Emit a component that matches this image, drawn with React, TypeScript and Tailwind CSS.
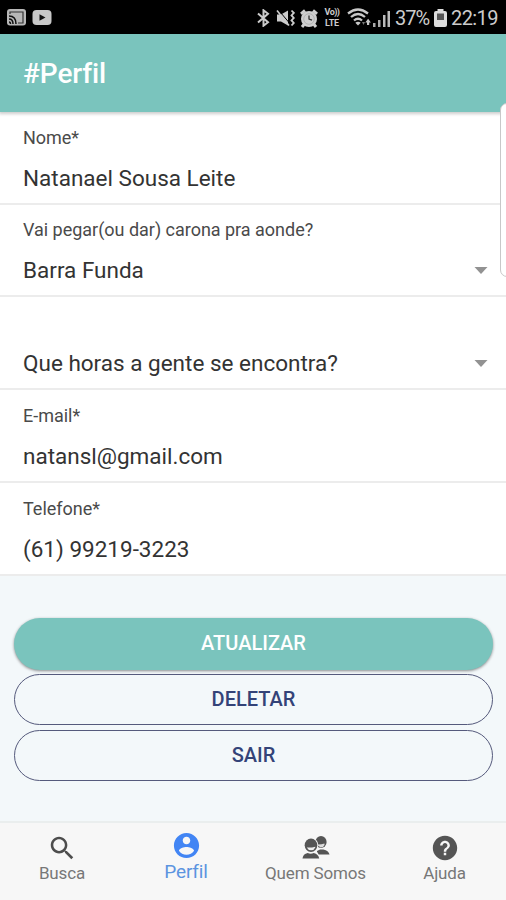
import type { ReactNode } from "react";
import { IoMdContact, IoMdHelpCircle, IoMdSearch } from "react-icons/io";

function CastIcon() {
  return (
    <svg width="19" height="17" viewBox="0 0 19 17">
      <rect width="19" height="16.5" rx="3" fill="#b8b8b8" />
      <path d="M3 5V3h13v11h-5" fill="none" stroke="#333" strokeWidth="1.2" />
      <path d="M2 7q7 0 7 8M2 10q4 0 4 5M2 13q1.5 0 1.5 2" fill="none" stroke="#111" strokeWidth="1.5" />
    </svg>
  );
}

function PlayIcon() {
  return (
    <svg width="20" height="15" viewBox="0 0 20 15">
      <rect x="0.5" width="19" height="15" rx="4" fill="#c8c8c8" />
      <path d="M7.5 4.2v6.6l6-3.3z" fill="#111" />
    </svg>
  );
}

function BluetoothIcon() {
  return (
    <svg width="13" height="18" viewBox="0 0 13 18" fill="none" stroke="#ccc" strokeWidth="2">
      <path d="M1 4.500l10 8.700-4.500 3.500V1.300L11 4.800 1 13.500" />
    </svg>
  );
}

function MuteIcon() {
  return (
    <svg width="19" height="19" viewBox="0 0 19 19" fill="#ccc">
      <path d="M1 5.500h4l7-4v15l-7-4H1z" />
      <path d="M2 .5l11 13" stroke="#000" strokeWidth="1" />
      <path d="M1 1.500l12 15" stroke="#ccc" strokeWidth="1.6" />
      <path d="M15.5 1.5l2.3 2.4-2.3 2.5 2.3 2.5-2.3 2.5 2.3 2.5-2.3 2.6" fill="none" stroke="#ccc" strokeWidth="1.8" />
    </svg>
  );
}

function AlarmIcon() {
  return (
    <svg width="18" height="19" viewBox="0 0 18 19" fill="none" stroke="#cfcfcf">
      <circle cx="9" cy="10" r="8" fill="#cfcfcf" stroke="none" />
      <path d="M1 4.8L5 1.500M17 4.8l-4-3.300M4 15.500L2 18M14 15.500l2 2.500" strokeWidth="3" />
      <circle cx="9" cy="10" r="5.300" stroke="#aaa" strokeWidth="0.8" />
      <path d="M9 6.500V10l3 1.200" stroke="#333" strokeWidth="1.300" />
    </svg>
  );
}

function WifiIcon() {
  return (
    <svg width="26" height="20" viewBox="0 0 26 20" fill="none" stroke="#c8c8c8" strokeWidth="2.300">
      <path d="M1 5.500q10-8 20 0M4 9q7-6 14 0M7 12.500q4-3.600 8 0" />
      <path d="M11 17.500l-2.700-2.800q2.700-2 5.400 0z" fill="#c8c8c8" stroke="none" />
      <path d="M15 14h3l-1.500 3z" fill="#777" stroke="none" />
      <path d="M18.300 14.500l2.800-3.800 2.800 3.800h-1.700V17H20v-2.500z" fill="#c8c8c8" stroke="none" />
    </svg>
  );
}

function SignalIcon() {
  return (
    <svg width="18" height="17" viewBox="0 0 18 17">
      <path d="M0 13h2.500v4H0zM5 10h2.500v7H5z" fill="#aaa" />
      <path d="M10 5h2.500v12H10zM14.500 1H17v16h-2.500z" fill="#bbb" />
    </svg>
  );
}

function BatteryIcon() {
  return (
    <svg width="13" height="18" viewBox="0 0 13 18">
      <path d="M3.500 0h6v2H11q2 0 2 2v12q0 2-2 2H2q-2 0-2-2V4q0-2 2-2h1.500z" fill="#ddd" />
      <path d="M3 4.500h7V11H3z" fill="#555" />
    </svg>
  );
}

function PeopleIcon() {
  return (
    <svg width="28" height="25" viewBox="0 0 28 25">
      <g fill="#555">
        <ellipse cx="19" cy="7" rx="5.600" ry="6" />
        <path d="M15 19.500v-3.500l3-1.500h3.500q5 1 6 5z" />
      </g>
      <path d="M15 9.500q4 .3 7.500-1v1.500q-1 2.500-4 2.500z" fill="#ddd" />
      <ellipse cx="9" cy="10.300" rx="7.400" ry="7.600" fill="#f7f7f7" />
      <path d="M4 16h10q3 2 3.500 8H4z" fill="#f7f7f7" />
      <ellipse cx="9" cy="10.300" rx="6.300" ry="6.800" fill="#555" />
      <path d="M4.800 12.500q4.500.3 8.500-.8v.8q-1.200 2.800-4.200 2.800t-4.300-2.800z" fill="#eee" />
      <path d="M.5 23.500q.5-4.700 5.200-5.500 3 1.500 6 0 4.800 1 5.500 5.500z" fill="#555" />
    </svg>
  );
}

function StatusBar() {
  return (
    <div className="flex h-[34px] justify-between bg-black pl-[7px] pr-2 pt-[9px] text-[#ccc]">
      <div className="flex gap-[6px]">
        <CastIcon />
        <div className="pt-[1px]"><PlayIcon /></div>
      </div>
      <div className="flex items-start">
        <div className="mr-[6px]"><BluetoothIcon /></div>
        <div className="mr-[5px]"><MuteIcon /></div>
        <div className="mr-[5px]"><AlarmIcon /></div>
        <div className="mr-[6px] w-[18px] text-center text-[9px] font-bold tracking-[-0.2px]">
          <div className="-mt-[2px] h-[11px] leading-[11px] tracking-[-0.5px]">Vo))</div>
          <div className="h-[11px] leading-[11px]">LTE</div>
        </div>
        <div className="-mt-[1px]"><WifiIcon /></div>
        <div className="mr-[4px] mt-[1px]"><SignalIcon /></div>
        <span className="mr-[4px] w-[35px] whitespace-nowrap text-[20px] leading-[19px] tracking-[-1px]">37%</span>
        <div className="mr-[4px]"><BatteryIcon /></div>
        <span className="w-[47px] whitespace-nowrap text-[20px] leading-[19px] tracking-[-0.6px]">22:19</span>
      </div>
    </div>
  );
}

interface FieldProps {
  label?: string;
  value: string;
  height?: string;
  select?: boolean;
}

function Field({ label, value, height = "h-[93px]", select }: FieldProps) {
  return (
    <div className={`${height} flex flex-col justify-end border-b-2 border-[#ececec] bg-white px-[23px] pb-[10px]`}>
      {label && <div className="mb-[13px] text-[18px] leading-6 tracking-[-0.02px] text-[#4a4a4a]">{label}</div>}
      <div className="flex items-center justify-between leading-[30px]">
        <span className="whitespace-nowrap text-[22.5px] text-[#333]">{value}</span>
        {select && (
          <svg className="-mr-[5px] mt-[1px]" width="14" height="7" viewBox="0 0 14 7">
            <path d="M.5 0h13L7 7z" fill="#929292" />
          </svg>
        )}
      </div>
    </div>
  );
}

function Tab({ icon, label, className }: { icon: ReactNode; label: string; className: string }) {
  return (
    <button className={`flex flex-col items-center whitespace-nowrap ${className}`}>
      {icon}
      <span>{label}</span>
    </button>
  );
}

export default function App() {
  return (
    <div className="relative flex h-[900px] w-[506px] flex-col overflow-hidden bg-[#f3f8fa] font-['Roboto',sans-serif]">
      <StatusBar />
      <header className="z-10 flex h-[78px] items-center bg-[#7ac4bd] px-[23px] pt-[2px] text-white shadow-[0_1px_3px_1px_rgba(0,0,0,0.2)]">
        <h1 className="text-[28px] font-medium leading-8 tracking-[-0.1px]">#Perfil</h1>
      </header>
      <main>
        <Field label="Nome*" value="Natanael Sousa Leite" />
        <Field label="Vai pegar(ou dar) carona pra aonde?" value="Barra Funda" height="h-[92px]" select />
        <Field value="Que horas a gente se encontra?" select />
        <Field label="E-mail*" value="natansl@gmail.com" />
        <Field label="Telefone*" value="(61) 99219-3223" />
      </main>
      <section className="flex flex-1 flex-col gap-[5px] pl-[14px] pr-[13px] pt-[42px] text-[20px] text-[#334378]">
        <button className="-mb-[1px] h-[52px] shrink-0 rounded-full bg-[#7ac4bd] pb-[2px] font-medium text-white shadow-[0_1px_3px_rgba(0,0,0,0.45)]">ATUALIZAR</button>
        <button className="h-[51px] shrink-0 rounded-full border border-[#555a7c] pb-[2px] font-medium">DELETAR</button>
        <button className="h-[51px] shrink-0 rounded-full border border-[#555a7c] pb-[2px] font-medium">SAIR</button>
      </section>
      <nav className="flex h-[79px] border-t-2 border-[#eaeeee] bg-[#f7f7f7] text-[17px] leading-5 tracking-[-0.15px] text-[#777]">
        <Tab className="w-[124px] pt-[10px]" label="Busca" icon={<IoMdSearch className="size-[30px] text-[#4d4d4d]" />} />
        <Tab className="w-[124px] pt-[7px] text-[19px] text-[#5c94e0]" label="Perfil" icon={<IoMdContact className="mb-[1px] size-[31px] text-[#4285f4]" />} />
        <Tab className="w-[135px] pt-[12px]" label="Quem Somos" icon={<div className="mb-[3px]"><PeopleIcon /></div>} />
        <Tab className="w-[123px] pt-[10px]" label="Ajuda" icon={<IoMdHelpCircle className="size-[30px] text-[#555]" />} />
      </nav>
      <div className="absolute left-[500px] top-[103px] z-20 h-[174px] w-5 rounded-[7px] border border-[#c8c8c8] bg-white" />
    </div>
  );
}
